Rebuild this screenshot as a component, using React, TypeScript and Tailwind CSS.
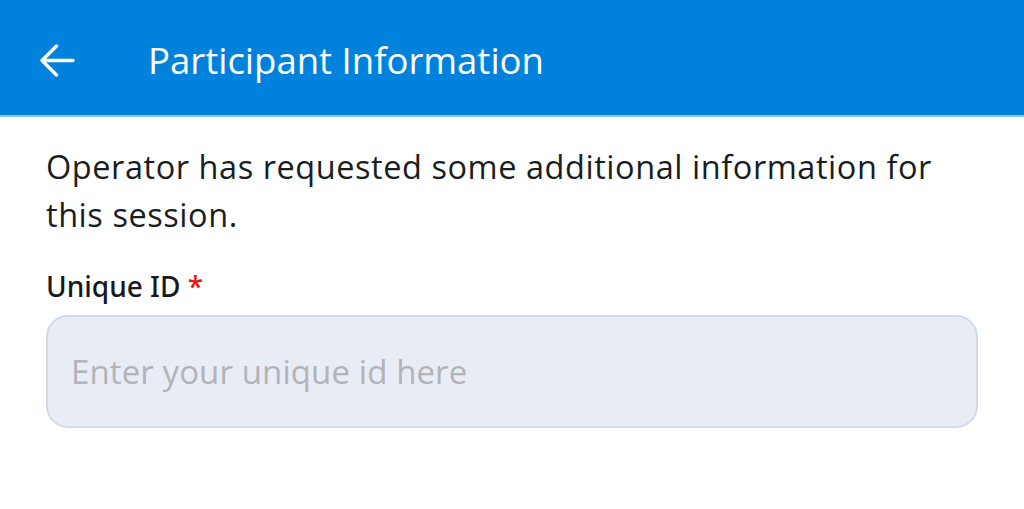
import React from "react";

export default function App() {
  return (
    <div className="w-[1024px] h-[509px] bg-white" style={{ fontFamily: '"Open Sans", "Noto Sans", sans-serif' }}>
      <div className="h-[117px] bg-[#0082dc] border-b-2 border-[#8cc4f0] flex items-center pt-[5px]">
        <div className="w-[148px] flex items-center pl-[40px]">
          <svg width="35" height="33" viewBox="0 0 35 33" fill="none" stroke="white" strokeWidth="3.4" strokeLinecap="round" strokeLinejoin="round">
            <path d="M33 16.5H3" />
            <path d="M16.5 2L2 16.5L16.5 31" />
          </svg>
        </div>
        <div className="text-white text-[36.5px] leading-none">Participant Information</div>
      </div>
      <div className="px-[46px]">
        <p className="mt-[26px] text-[32.5px] leading-[48px] text-[#1a1d21] tracking-[0.55px]">
          Operator has requested some additional information for this session.
        </p>
        <div
          className="mt-[29px] text-[28px] leading-[36px] font-medium text-[#16191d]"
          style={{ fontFamily: '"Noto Sans", "Open Sans", sans-serif' }}
        >
          Unique ID <span className="text-[#f01010]">*</span>
        </div>
        <div className="mt-[11px] h-[113px] rounded-[22px] bg-[#e8ecf5] border-2 border-[#cfdbea] flex items-center px-[23px]">
          <span className="text-[33px] text-[#b3b3b8] tracking-[0.1px]">Enter your unique id here</span>
        </div>
      </div>
    </div>
  );
}
